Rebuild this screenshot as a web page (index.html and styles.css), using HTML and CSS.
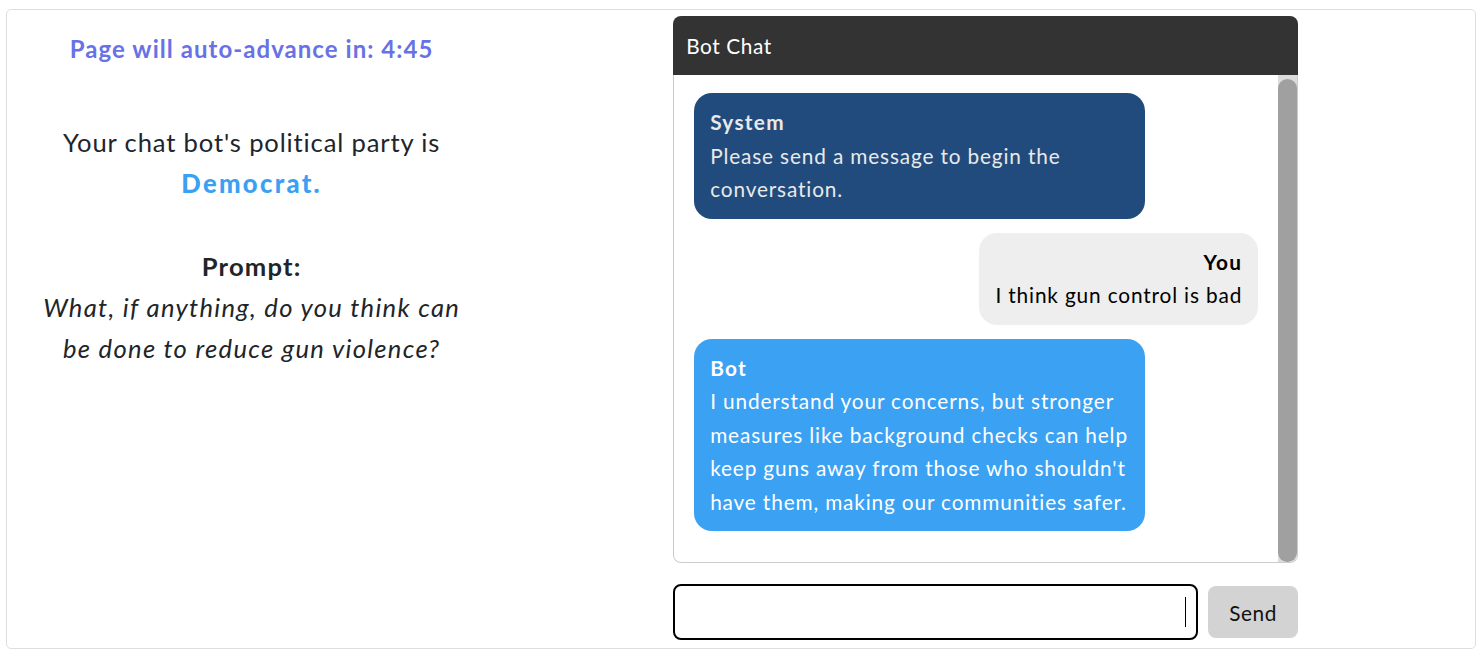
FILE: index.html
```html
<!DOCTYPE html>
<html lang="en">
<head>
<meta charset="utf-8">
<title>Bot Chat</title>
<link rel="stylesheet" href="styles.css">
</head>
<body>
<main class="card">
  <section class="info">
    <h2 class="timer">Page will auto-advance in: 4:45</h2>
    <p class="party">Your chat bot's political party is<br><strong class="dem">Democrat.</strong></p>
    <p class="prompt"><strong>Prompt:</strong><br><em>What, if anything, do you think can<br>be done to reduce gun violence?</em></p>
  </section>
  <section class="chat-col">
    <div class="chat">
      <div class="chat-header">Bot Chat</div>
      <div class="messages">
        <div class="thread">
          <div class="msg system">
            <div class="who">System</div>
            <div class="text">Please send a message to begin the<br>conversation.</div>
          </div>
          <div class="msg you">
            <div class="who">You</div>
            <div class="text">I think gun control is bad</div>
          </div>
          <div class="msg bot">
            <div class="who">Bot</div>
            <div class="text">I understand your concerns, but stronger<br>measures like background checks can help<br>keep guns away from those who shouldn't<br>have them, making our communities safer.</div>
          </div>
        </div>
        <div class="scrollbar" aria-hidden="true"><div class="thumb"></div></div>
      </div>
      <form class="composer">
        <div class="field"><input type="text" class="input" aria-label="Message"></div>
        <button type="button" class="send">Send</button>
      </form>
    </div>
  </section>
</main>
</body>
</html>
```
FILE: styles.css
```css
* { box-sizing: border-box; }
html, body { margin: 0; padding: 0; background: #fff; }
body {
  font-family: Lato, "Noto Sans", sans-serif;
  color: #212529;
}
.card {
  margin: 9px 7px 8px 6px;
  border: 1px solid #dedede;
  border-radius: 5px;
  display: grid;
  grid-template-columns: 1fr 2fr;
  padding: 6px 0 8px;
}
.info {
  text-align: center;
  padding: 14px 10px 0;
}
.timer {
  margin: 0 0 54px;
  font-size: 24px;
  line-height: 38.4px;
  font-weight: 700;
  letter-spacing: 1.05px;
  color: #6872e6;
}
.party, .prompt {
  margin: 0;
  font-size: 25.6px;
  line-height: 41px;
  letter-spacing: 0.85px;
}
.prompt { margin-top: 42px; }
.prompt em { letter-spacing: 1.3px; }
.dem { color: #3ba0f2; font-weight: 900; letter-spacing: 2.3px; }
.prompt strong { font-weight: 700; letter-spacing: 1.2px; }
.chat-col {
  display: flex;
  justify-content: center;
}
.chat {
  width: 625px;
  display: flex;
  flex-direction: column;
}
.chat-header {
  height: 59px;
  background: #333;
  color: #fff;
  border-radius: 8px 8px 0 0;
  padding: 0 13px;
  font-size: 20.8px;
  line-height: 59px;
  letter-spacing: 0.6px;
}
.messages {
  height: 488px;
  border: 1px solid #cccccc;
  border-top: none;
  border-radius: 0 0 8px 8px;
  overflow: hidden;
  display: flex;
}
.thread {
  flex: 1;
  display: flex;
  flex-direction: column;
  gap: 14px;
  padding: 18px 20px 0;
}
.scrollbar {
  width: 19px;
  background: #dcdcdc;
  padding-top: 4px;
  display: flex;
}
.thumb {
  flex: 1;
  background: #a0a0a0;
  border-radius: 10px;
}
.msg {
  max-width: 80%;
  border-radius: 18px;
  padding: 12px 16px 13px;
  font-size: 20.8px;
  line-height: 33.5px;
  letter-spacing: 0.85px;
}
.text { white-space: nowrap; }
.who { font-weight: 700; letter-spacing: 1.3px; }
.system { align-self: flex-start; width: 80%; background: #214b7c; color: #e9e9e9; }
.you { align-self: flex-end; background: #eeeeee; color: #000; text-align: right; }
.bot { align-self: flex-start; width: 80%; background: #3ba1f3; color: #fff; }
.composer {
  margin: 21px 0 0;
  display: flex;
  align-items: center;
  gap: 10px;
}
.field {
  position: relative;
  flex: 1;
}
.field::after {
  content: "";
  position: absolute;
  right: 12px;
  top: 13px;
  width: 1px;
  height: 30px;
  background: #000;
}
.input {
  display: block;
  width: 100%;
  height: 56px;
  border: 2px solid #000;
  border-radius: 8px;
  font: inherit;
  font-size: 20.8px;
  padding: 0 12px;
  outline: none;
  background: #fff;
}
.send {
  width: 90px;
  height: 52px;
  border: none;
  border-radius: 8px;
  background: #d3d3d3;
  color: #111;
  font: inherit;
  font-size: 20.8px;
  letter-spacing: 0.6px;
  cursor: pointer;
}
```
